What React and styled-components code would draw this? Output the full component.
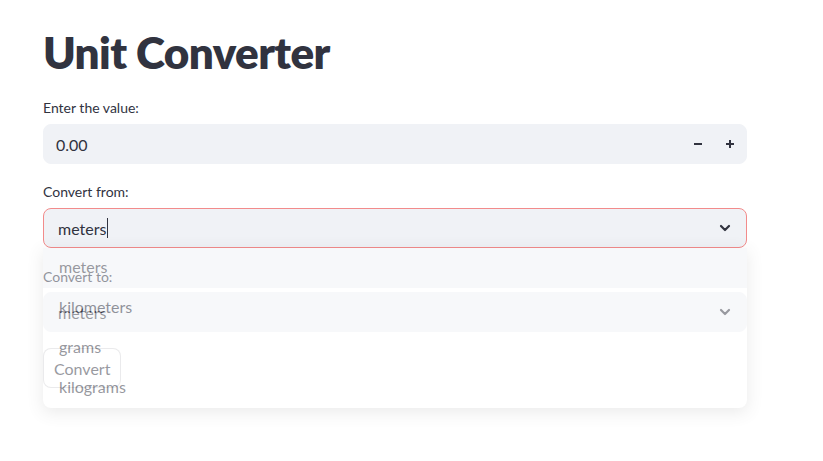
import React from "react";
import styled, { createGlobalStyle } from "styled-components";

const Global = createGlobalStyle`
  html, body { margin: 0; padding: 0; background: #ffffff; }
  body { font-family: "Source Sans Pro", "Lato", "Noto Sans", sans-serif; color: #31333f; }
  * { box-sizing: border-box; }
`;

const Main = styled.main`
  width: 823px;
  height: 461px;
  padding: 24px 0 0 43px;
  overflow: hidden;
`;

const Column = styled.div`
  width: 704px;
  display: flex;
  flex-direction: column;
`;

const Title = styled.h1`
  margin: 0 0 18px 0;
  font-size: 44px;
  font-weight: 800;
  line-height: 56px;
  letter-spacing: -0.6px;
  color: #31333f;
`;

const Field = styled.div`
  display: flex;
  flex-direction: column;
  margin-bottom: ${(p) => p.$gap || 16}px;
  position: relative;
`;

const Label = styled.label`
  font-size: 14px;
  line-height: 20px;
  height: 20px;
  margin-bottom: ${(p) => p.$mb || 6}px;
  margin-top: ${(p) => p.$mt || 0}px;
  color: #31333f;
`;

const Control = styled.div`
  height: 40px;
  border-radius: 8px;
  background: #f0f2f6;
  border: 1px solid ${(p) => (p.$focused ? "#f28b8b" : "#f0f2f6")};
  display: flex;
  align-items: center;
  padding: 0 12px 0 ${(p) => p.$pl || 12}px;
  font-size: 16px;
  color: #31333f;
  position: relative;
`;

const Value = styled.span`
  flex: 1;
  display: flex;
  align-items: center;
`;

const Caret = styled.span`
  display: inline-block;
  width: 1px;
  height: 20px;
  background: #31333f;
  margin-left: 1px;
`;

const StepBtn = styled.button`
  width: 32px;
  height: 38px;
  border: none;
  background: transparent;
  display: flex;
  align-items: center;
  justify-content: center;
  padding: 0;
  color: #31333f;
`;

const Steppers = styled.div`
  display: flex;
  margin-right: -12px;
`;

const Chevron = styled.svg`
  width: 14px;
  height: 14px;
  margin-right: 2px;
`;

const Button = styled.button`
  align-self: flex-start;
  height: 40px;
  padding: 0 10px;
  margin-top: 1px;
  border-radius: 8px;
  border: 1px solid rgba(49, 51, 63, 0.2);
  background: #ffffff;
  font-family: inherit;
  font-size: 16px;
  color: #31333f;
`;

const Menu = styled.ul`
  position: absolute;
  top: 100%;
  left: 0;
  width: 100%;
  margin: 0;
  padding: 0;
  list-style: none;
  background: #ffffff;
  border-radius: 0 0 8px 8px;
  box-shadow: 0 4px 16px rgba(0, 0, 0, 0.16);
  opacity: 0.5;
  z-index: 10;
  overflow: hidden;
`;

const Option = styled.li`
  height: 40px;
  display: flex;
  align-items: center;
  padding: 0 0 3px 16px;
  font-size: 16px;
  color: #31333f;
  background: ${(p) => (p.$active ? "#f0f2f6" : "transparent")};
`;

const ChevronIcon = ({ color = "#31333f" }) => (
  <Chevron viewBox="0 0 14 14">
    <path d="M3 5 L7 9 L11 5" fill="none" stroke={color} strokeWidth="2.2" strokeLinecap="round" strokeLinejoin="round" />
  </Chevron>
);

const options = ["meters", "kilometers", "grams", "kilograms"];

export default function App() {
  return (
    <>
      <Global />
      <Main>
        <Column>
          <Title>Unit Converter</Title>
          <Field $gap={18}>
            <Label>Enter the value:</Label>
            <Control>
              <Value>0.00</Value>
              <Steppers>
                <StepBtn aria-label="minus">
                  <svg width="10" height="10" viewBox="0 0 10 10">
                    <path d="M1 5 H9" stroke="#31333f" strokeWidth="2" />
                  </svg>
                </StepBtn>
                <StepBtn aria-label="plus">
                  <svg width="10" height="10" viewBox="0 0 10 10">
                    <path d="M1 5 H9 M5 1 V9" stroke="#31333f" strokeWidth="2" />
                  </svg>
                </StepBtn>
              </Steppers>
            </Control>
          </Field>
          <Field $gap={18}>
            <Label>Convert from:</Label>
            <Control $focused $pl={14}>
              <Value>
                meters<Caret />
              </Value>
              <ChevronIcon />
            </Control>
            <Menu>
              {options.map((o, i) => (
                <Option key={o} $active={i === 0}>
                  {o}
                </Option>
              ))}
            </Menu>
          </Field>
          <Field $gap={15}>
            <Label $mt={1} $mb={5}>Convert to:</Label>
            <Control $pl={14}>
              <Value>meters</Value>
              <ChevronIcon />
            </Control>
          </Field>
          <Button>Convert</Button>
        </Column>
      </Main>
    </>
  );
}
